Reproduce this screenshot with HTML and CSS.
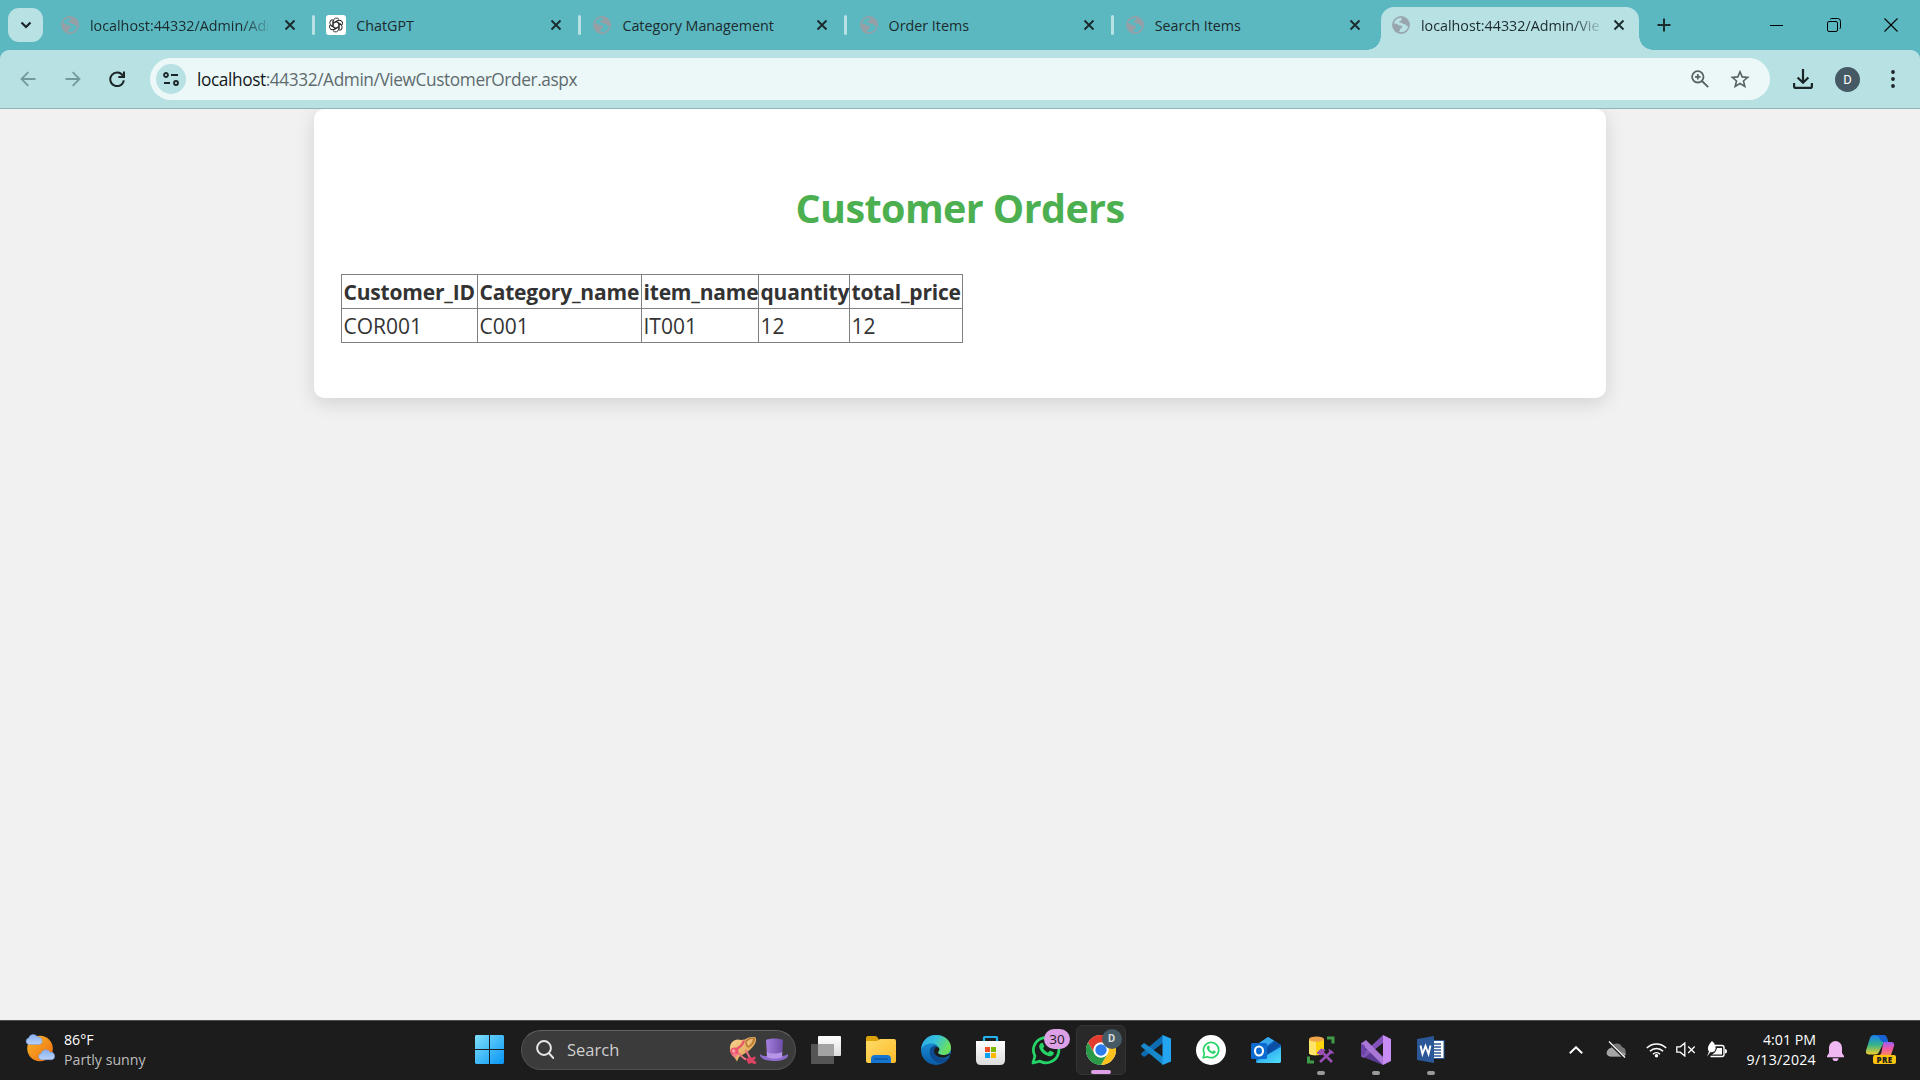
FILE: index.html
```html
<!DOCTYPE html>
<html lang="en">
<head>
<meta charset="utf-8">
<title>Customer Orders</title>
<link rel="stylesheet" href="styles.css">
</head>
<body>
<svg class="defs" width="0" height="0" aria-hidden="true">
  <defs>
    <symbol id="globe" viewBox="0 0 18 18">
      <circle cx="9" cy="9" r="8.100" fill="none" stroke="currentColor" stroke-width="1.600"/>
      <path d="M10 1.200c4 .3 7 3.600 7 7.600l-.6 1.400-2.200-.6-1-1.400-2.400-.2-.6-1.300H7.600L7.200 5.300l2.200-.8zM1.200 7.200l3.300.6 2.300 1.500 3 .5.500 1.900-2.100 1-.5 2.200-1.900 1.600C2.900 15.300 1.200 12.400 1.200 9z" fill="currentColor"/>
    </symbol>
    <symbol id="x" viewBox="0 0 12 12"><path d="M1.500 1.500l9 9M10.500 1.500l-9 9" stroke="#1b2b2d" stroke-width="1.900" fill="none"/></symbol>
    <symbol id="whatsapp" viewBox="0 0 30 30">
      <path d="M2 28l1.900-7A12.700 12.700 0 1 1 9 26.200z" fill="none" stroke="#25d366" stroke-width="2.800" stroke-linejoin="round"/>
      <path d="M9.500 8.500c1-1.200 2.200-1 2.700.2l.9 2.200c.3.800-.3 1.400-1.100 2.200 1.100 2.200 2.700 3.700 5 4.700l1.500-1.700c.5-.6 1-.4 1.500-.2l2.200 1.100c.9.500.7 1.400.3 2.300-.8 1.700-3.300 2.500-5.300 1.800-4.500-1.500-7.400-4.300-8.800-8.200-.5-1.700 0-3.300 1.100-4.400z" fill="#25d366"/>
    </symbol>
    <linearGradient id="gWin" x2="1" y2="1"><stop stop-color="#7fe0fb"/><stop offset="1" stop-color="#0795f5"/></linearGradient>
    <linearGradient id="gSun" x2="1" y2="1"><stop stop-color="#f7b92b"/><stop offset="1" stop-color="#f06a0d"/></linearGradient>
    <linearGradient id="gCloud" x2="0" y2="1"><stop stop-color="#8bb0ee"/><stop offset="1" stop-color="#b7d2fb"/></linearGradient>
    <linearGradient id="gFolder" x2="1" y2="1"><stop stop-color="#ffdc66"/><stop offset="1" stop-color="#fdbb2b"/></linearGradient>
    <linearGradient id="gEdge1" x2="1" y2=".4"><stop stop-color="#2aa5e8"/><stop offset=".5" stop-color="#35c1dc"/><stop offset="1" stop-color="#6ce05c"/></linearGradient>
    <linearGradient id="gEdge2" x2="0" y2="1"><stop stop-color="#1a9de4"/><stop offset="1" stop-color="#0c59a4"/></linearGradient>
    <linearGradient id="gBag" x2="0" y2="1"><stop stop-color="#fff"/><stop offset="1" stop-color="#dcdcdc"/></linearGradient>
    <linearGradient id="gCyan" x2="1" y2="1"><stop stop-color="#1b8fe8"/><stop offset="1" stop-color="#53e1fb"/></linearGradient>
    <linearGradient id="gCop1" x2="0" y2="1"><stop stop-color="#1a7ff0"/><stop offset=".5" stop-color="#34b38a"/><stop offset="1" stop-color="#f2cf2a"/></linearGradient>
    <linearGradient id="gCop2" x2="0" y2="1"><stop stop-color="#9a5cf5"/><stop offset=".5" stop-color="#f05aa8"/><stop offset="1" stop-color="#fb8a5c"/></linearGradient>
    <linearGradient id="gHat" x2="1"><stop stop-color="#a37fdb"/><stop offset="1" stop-color="#6e4fa9"/></linearGradient>
    <linearGradient id="gStraw" x2="1" y2="1"><stop stop-color="#fbd797"/><stop offset="1" stop-color="#d8943f"/></linearGradient>
  </defs>
</svg>

<div class="screen">
  <header class="tabstrip">
    <button class="tab-search" aria-label="Search tabs"><svg width="12" height="8" viewBox="0 0 12 8"><path d="M1.500 1.500 6 6l4.500-4.500" fill="none" stroke="#1b2527" stroke-width="2.200"/></svg></button>
    <div class="tabs">
      <div class="tab"><svg class="fav"><use href="#globe"/></svg><span class="tab-title fade">localhost:44332/Admin/AdminHome</span><svg class="tab-x"><use href="#x"/></svg></div>
      <div class="tab">
        <svg class="fav gpt" viewBox="0 0 20 20"><rect width="20" height="20" rx="3" fill="#fff"/><g fill="none" stroke="#222" stroke-width=".9"><path id="petal" d="M7.300 10.900V6.200a3.200 3.200 0 0 1 5.700-1.900M7.300 7.900l3.900-2.300a3.200 3.200 0 0 1 1.600-.4"/><use href="#petal" transform="rotate(60 10 10)"/><use href="#petal" transform="rotate(120 10 10)"/><use href="#petal" transform="rotate(180 10 10)"/><use href="#petal" transform="rotate(240 10 10)"/><use href="#petal" transform="rotate(300 10 10)"/></g></svg>
        <span class="tab-title">ChatGPT</span><svg class="tab-x"><use href="#x"/></svg></div>
      <div class="tab"><svg class="fav"><use href="#globe"/></svg><span class="tab-title">Category Management</span><svg class="tab-x"><use href="#x"/></svg></div>
      <div class="tab"><svg class="fav"><use href="#globe"/></svg><span class="tab-title">Order Items</span><svg class="tab-x"><use href="#x"/></svg></div>
      <div class="tab last"><svg class="fav"><use href="#globe"/></svg><span class="tab-title">Search Items</span><svg class="tab-x"><use href="#x"/></svg></div>
      <div class="tab active"><svg class="fav"><use href="#globe"/></svg><span class="tab-title fade">localhost:44332/Admin/ViewCustomer</span><svg class="tab-x"><use href="#x"/></svg></div>
    </div>
    <svg class="new-tab" width="14" height="14" viewBox="0 0 14 14"><path d="M7 .5v13M.5 7h13" stroke="#1b2b2d" stroke-width="2"/></svg>
    <div class="win-controls">
      <svg width="14" height="14" viewBox="0 0 14 14"><path d="M1 7.500h13" stroke="#000"/></svg>
      <svg width="14" height="14" viewBox="0 0 14 14" fill="none" stroke="#000"><rect x=".5" y="3.500" width="10" height="10" rx="1.500"/><path d="M3 1.400C3.500.8 4 .5 4.700.5h6a2.800 2.800 0 0 1 2.800 2.800v6c0 .8-.3 1.300-.9 1.700"/></svg>
      <svg width="14" height="14" viewBox="0 0 14 14"><path d="M.5.500l13 13M13.500.5l-13 13" stroke="#000" stroke-width="1.100"/></svg>
    </div>
  </header>

  <div class="toolbar-wrap">
  <nav class="toolbar">
    <div class="nav-buttons">
      <svg width="16" height="16" viewBox="0 0 16 16" fill="none" stroke="#73999d" stroke-width="1.800"><path d="M15.500 8H1.800M8.300 1.200 1.500 8l6.800 6.800"/></svg>
      <svg width="16" height="16" viewBox="0 0 16 16" fill="none" stroke="#73999d" stroke-width="1.800"><path d="M.5 8h13.700M7.700 1.200 14.500 8l-6.800 6.800"/></svg>
      <svg width="16" height="16" viewBox="0 0 16 16" fill="none" stroke="#1b2527" stroke-width="2"><path d="M13.800 4.600A6.800 6.800 0 1 0 14.800 9.300M15 .5v5.400H9.300"/></svg>
    </div>
    <div class="omnibox">
      <span class="site-info"><svg width="16" height="14" viewBox="0 0 16 14" fill="none" stroke="#1b2527" stroke-width="1.800"><circle cx="3" cy="3" r="2"/><path d="M8 3h7M1 11h6"/><circle cx="13" cy="11" r="2"/></svg></span>
      <span class="url"><b>localhost</b>:44332/Admin/ViewCustomerOrder.aspx</span>
      <svg class="zoom-ic" width="18" height="18" viewBox="0 0 18 18" fill="none" stroke="#566164" stroke-width="1.800"><circle cx="6.800" cy="6.800" r="5.700"/><path d="M11 11l6.200 6.200M6.800 4v5.600M4 6.800h5.600"/></svg>
      <svg class="star-ic" width="20" height="18" viewBox="0 0 20 18" fill="none" stroke="#566164" stroke-width="1.600"><path d="M10 1.800l2.200 5.100 5.500.5-4.200 3.600 1.300 5.400L10 13.500l-4.800 2.900L6.500 11 2.300 7.400l5.500-.5z"/></svg>
    </div>
    <svg class="download" width="20" height="20" viewBox="0 0 20 20" fill="none" stroke="#1b2527" stroke-width="2.200"><path d="M10 0v13.500M4.600 8.500 10 13.800l5.400-5.300M1.100 14v3.200c0 1 .6 1.700 1.700 1.700h14.400c1.100 0 1.700-.7 1.700-1.700V14"/></svg>
    <span class="avatar">D</span>
    <svg class="dots" width="4" height="18" viewBox="0 0 4 18" fill="#1b2527"><circle cx="2" cy="2" r="1.900"/><circle cx="2" cy="9" r="1.900"/><circle cx="2" cy="16" r="1.900"/></svg>
  </nav>
  </div>

  <main class="page">
    <section class="card">
      <h1>Customer Orders</h1>
      <table>
        <colgroup><col class="c1"><col class="c2"><col class="c3"><col class="c4"><col class="c5"></colgroup>
        <tr><th>Customer_ID</th><th>Category_name</th><th>item_name</th><th>quantity</th><th>total_price</th></tr>
        <tr><td>COR001</td><td>C001</td><td>IT001</td><td>12</td><td>12</td></tr>
      </table>
    </section>
  </main>

  <footer class="taskbar">
    <div class="weather">
      <svg width="30" height="30" viewBox="0 0 30 30"><circle cx="15" cy="15.500" r="12.800" fill="url(#gSun)"/><path id="cloud" d="M3.500 11.500a3.300 3.300 0 0 1 .2-6.400A4.800 4.800 0 0 1 12.600 4a3.900 3.900 0 0 1 2 7.500z" fill="url(#gCloud)" stroke="#7799e0" stroke-width=".5"/><use href="#cloud" x="12.500" y="15.200"/></svg>
      <div class="weather-text"><span>86°F</span><span class="dim">Partly sunny</span></div>
    </div>

    <div class="apps">
      <svg class="start" width="29" height="29" viewBox="0 0 29 29"><path d="M1 0h13v14H0V1zM15 0h13l1 1v13H15zM0 15h14v14H1l-1-1zM15 15h14v13l-1 1H15z" fill="url(#gWin)"/></svg>
      <div class="search">
        <svg width="18" height="19" viewBox="0 0 18 19" fill="none" stroke="#e6e6e6" stroke-width="2"><circle cx="8" cy="8" r="6.900"/><path d="M12.800 13l4.600 5" stroke-linecap="round"/></svg>
        <span class="search-label">Search</span>
        <svg class="hats" width="58" height="28" viewBox="0 0 58 28">
          <path d="M0 11C0 5 5 1 11 3l4-.5C19 0 23-.5 25.500.5c2 4-2 10-7.500 14-3 2-7 4-9 5.500l-2 4.500-2.500-4C1 18 0 15 0 11z" fill="url(#gStraw)"/>
          <path d="M15.500 3.500C19 .5 23 0 25 1.200c.5 3.500-3 8-7 9.500-2-1-3.200-3-2.500-7.200z" fill="#b97a33"/>
          <path d="M16.500 5c2-2.500 4.500-3.500 6.500-3-.5 3-2.500 6-5 7z" fill="#edbd76"/>
          <path d="M14 3.500c-1 4-4 7-8.500 9" fill="none" stroke="#e4566c" stroke-width="2.400"/>
          <path d="M8 16c3 2 4.500 5 8 6.500M15.500 13c2 3 3.500 6 5.500 10" fill="none" stroke="#ef7186" stroke-width="2"/>
          <circle cx="4.500" cy="14.500" r="4" fill="#ec536e"/><circle cx="3.700" cy="14" r="1.700" fill="#ffa3a9"/><circle cx="5" cy="18" r="2.200" fill="#f4798b"/>
          <path d="M16 22l4-2.200 2 1 3-1.500.8 2.500-2.300 1.200 3 2-1 2.200-4-1.200-3 1z" fill="#dc4262"/>
          <path d="M30 17c-1 4 5 7 14 7s15-3 14-7c-3 2-6 2-8 2H37c-3 0-5 0-7-2z" fill="#8d6ccb"/>
          <path d="M36 3c4-2 13-2 17 0l-1 16c-4 2-11 2-15 0z" fill="url(#gHat)"/><path d="M36.700 15c4 2 11 2 15.600 0l-.3 5c-4 2-11 2-15 0z" fill="#b796e8"/>
        </svg>
      </div>
      <div class="app"><svg width="30" height="28" viewBox="0 0 30 28"><rect x="7" width="23" height="20" rx="1" fill="url(#gBag)"/><rect y="8" width="23" height="20" rx="1" fill="#5c5c5c" opacity=".9"/><path d="M7 8h16v12H7z" fill="#a3a3a3"/></svg></div>
      <div class="app"><svg width="30" height="27" viewBox="0 0 30 27"><path d="M0 2q0-2 2-2h7q2 0 3 2l1 2v5H0z" fill="#dca10b"/><path d="M0 5h11l3-2h14q2 0 2 2v20q0 2-2 2H2q-2 0-2-2z" fill="url(#gFolder)"/><path d="M5 27v-4q0-4 4-4h12q4 0 4 4v4z" fill="#1476d1"/><path d="M8 23h14" stroke="#0b519a" stroke-width="1.300"/></svg></div>
      <div class="app"><svg width="30" height="30" viewBox="0 0 30 30"><circle cx="15" cy="15" r="15" fill="url(#gEdge2)"/><path d="M1 10C3 4 8 0 15 0c9 0 15 6 15 12.500 0 5-3.500 7.500-8 7.500-3 0-5-1-5-2.500 0-1 1-1.500 1-3.500 0-3-3-5.500-7-5.500C6 8.500 2 10 0 15z" fill="url(#gEdge1)"/><path d="M15 10.500c-5 0-7 4-6 8.500 1 5 6 9 12 9.500 4-1.500 6.500-4 7.500-6.500-5 3-15 1.500-14.500-5 0-3 2-4 2-5z" fill="#0d4a8e"/><path d="M18.500 14c-1-2-3-2.500-4-1.500-3 3-1 8 3 9.500s9 .5 12-2.500l-1 3q2-2 .5-4c-2 1-4 1.500-7 1.500-3 0-5-1-5-2.500 0-1 1.500-1.500 1.500-3.500z" fill="#1c1c1c"/></svg></div>
      <div class="app"><svg width="29" height="30" viewBox="0 0 29 30"><path d="M8 8V2.500Q8 2 8.500 2h12q.5 0 .5.500V8" fill="none" stroke="#23b1ee" stroke-width="2.200"/><path d="M0 6h29v19q0 5-5 5H5q-5 0-5-5z" fill="url(#gBag)"/><path d="M9 12h5v5H9z" fill="#f04f23"/><path d="M15 12h5v5h-5z" fill="#7eb900"/><path d="M9 18h5v5H9z" fill="#09a3ed"/><path d="M15 18h5v5h-5z" fill="#fdb800"/></svg></div>
      <div class="app"><svg width="30" height="30"><use href="#whatsapp"/></svg><span class="badge">30</span></div>
      <div class="app current"><svg width="30" height="30" viewBox="0 0 30 30"><circle cx="15" cy="15" r="15" fill="#fff"/><path d="M2 7.500A15 15 0 0 1 28 7.500H15a7.500 7.500 0 0 0-6.500 11.200z" fill="#e33b2e"/><path d="M28 7.500A15 15 0 0 1 15 30l6.500-11.200A7.500 7.500 0 0 0 15 7.500z" fill="#fcc31e"/><path d="M15 30A15 15 0 0 1 2 7.500l6.500 11.300A7.500 7.500 0 0 0 21.500 18.700z" fill="#2a9a49"/><circle cx="15" cy="15" r="7.500" fill="#fff"/><circle cx="15" cy="15" r="5.700" fill="#2d7cee"/></svg><span class="profile-badge">D</span></div>
      <div class="app"><svg width="30" height="30" viewBox="0 0 30 30"><path d="M22 8L4 21.500q-1 .5-1.500 0L.6 20q-1-1 0-2L22 0z" fill="#0e6cb0"/><path d="M22 22L4 8.500q-1-.5-1.500 0L.6 10q-1 1 0 2L22 30z" fill="#1788ca"/><path d="M21.500 0L30 3.500v23L21.500 30z" fill="#23a5f0"/></svg></div>
      <div class="app"><svg width="30" height="30" viewBox="0 0 30 30"><circle cx="15" cy="15" r="15" fill="#fff"/><use href="#whatsapp" x="6" y="6" width="18" height="18"/></svg></div>
      <div class="app"><svg width="30" height="26" viewBox="0 0 30 26"><path d="M5 9L17 0l13 8v16q0 2-2 2H7q-2 0-2-2z" fill="#0f6cc4"/><path d="M5 8L17 0l6 3.500L10 13z" fill="#38a9ec"/><path d="M12 14L24 4l6 4-14 10z" fill="#0b4fa5"/><path d="M5 24l25-14v14q0 2-2 2H7q-2 0-2-2z" fill="url(#gCyan)"/><rect y="6" width="16" height="16" rx="1.500" fill="#0c6bd0"/><ellipse cx="8" cy="14" rx="4" ry="4.500" fill="none" stroke="#fff" stroke-width="2.100"/></svg></div>
      <div class="app running"><svg width="28" height="28" viewBox="0 0 28 28"><path d="M2 3v14c0 3 15 3 15 0V3z" fill="#fcd40e"/><path d="M2 3v14c0 1.500 3 2.300 7 2.300V3z" fill="#ffe46a"/><ellipse cx="9.500" cy="3.200" rx="7.500" ry="2.700" fill="#efa54b"/><path d="M20 2h6v5.500M1.500 20.500V26H7" fill="none" stroke="#3f9b48" stroke-width="3"/><path d="M13 26l12-11M15 16l10 10" stroke="#9a4fb5" stroke-width="2.600"/><path d="M10 17l4-4 4 1-4 5zM22 13l1 4 4 0" fill="#9a4fb5" stroke="#9a4fb5"/></svg></div>
      <div class="app running"><svg width="30" height="30" viewBox="0 0 30 30"><path d="M0 8.500L4 7l18 15v8L2 22 0 21z" fill="#5b3a93"/><path d="M0 21.500L3 23 22 8V0L8 13 0 20z" fill="#8153b8"/><path d="M0 8.500L5 5l17 17v8z" fill="#a877d8"/><path d="M4 11v8L0 21V8.500z" fill="#6d44a5"/><path d="M22 0l8 4v22l-8 4z" fill="#c98cf4"/></svg></div>
      <div class="app running"><svg width="28" height="27" viewBox="0 0 28 27"><rect x="12" y="4.500" width="15" height="18" fill="#fff" stroke="#2b5797"/><path d="M17 8h7M17 11h7M17 14h7M17 17h7M17 20h7" stroke="#2b5797" stroke-width="1.300"/><path d="M0 3l17-3v27L0 24z" fill="#2b5797"/><path d="M3.500 9.500l2 8.500 3-8 3 8 2-8.500" fill="none" stroke="#fff" stroke-width="1.900"/></svg></div>
    </div>

    <div class="tray">
      <svg class="chev" width="14" height="8" viewBox="0 0 14 8"><path d="M.8 7.200L7 1.200l6.200 6" fill="none" stroke="#fff" stroke-width="1.900"/></svg>
      <svg class="onedrive" width="21" height="18" viewBox="0 0 21 18"><path d="M4.500 15.500a4.400 4.400 0 0 1 .3-8.500A6 6 0 0 1 16 6a5 5 0 0 1 .5 9.500z" fill="#777"/><path d="M6 7c4-1 6 1 8 3l6 3c-1 2-2 2.500-3.500 2.500h-12A4.400 4.400 0 0 1 .5 12C1 9 3 7 6 7z" fill="#a5a5a5"/><path d="M2.500.800l16 16" stroke="#1c1c1c" stroke-width="3"/><path d="M3 .500l16 16" stroke="#fff" stroke-width="1.300"/></svg>
      <svg width="21" height="16" viewBox="0 0 21 16" fill="none" stroke="#fff" stroke-width="1.500"><path d="M.8 6a13.700 13.700 0 0 1 19.400 0M3.900 9.200a9.300 9.300 0 0 1 13.200 0M7 12.200a5 5 0 0 1 7 0"/><circle cx="10.500" cy="13.800" r="1.700" fill="#fff" stroke="none"/></svg>
      <svg class="mute" width="20" height="15" viewBox="0 0 20 15" fill="none" stroke="#fff" stroke-width="1.300"><path d="M.8 4.800h3.400L8.800 1v13l-4.600-3.800H.8zM12.200 4.500l6.500 6.500M18.700 4.500L12.200 11"/></svg>
      <svg width="21" height="18" viewBox="0 0 21 18"><path d="M9 4.500h7q2 0 2 2v7q0 2-2 2H4.500" fill="none" stroke="#fff" stroke-width="1.400"/><path d="M6 0c3.500 3 4.500 6.500 3 9.500-1 1.500-3 2-4.500 1.500L1 15.500 3 10.500C.5 7 3 3 6 0zM11 7h5v6.500H6q4-2 5-6.500zM19 8q2 0 2 2.300T19 12.500z" fill="#fff"/></svg>
      <div class="clock"><span>4:01 PM</span><span class="date">9/13/2024</span></div>
      <svg class="bell" width="17" height="20" viewBox="0 0 17 20" fill="#efb8f2"><path d="M8.500 0A6.500 6.500 0 0 1 15 6.500V12l2 3v1.200H0V15l2-3V6.500A6.500 6.500 0 0 1 8.500 0zM5.500 17.200h6a3 3 0 0 1-6 0z"/></svg>
      <span class="copilot"><svg width="29" height="22" viewBox="0 0 29 22"><path d="M8 0h9q3 0 4 3l1 4h-4l-5 10q-1 2.500-4 2.500H3q-4 0-3-4L4 3q1-3 4-3z" fill="url(#gCop1)"/><path d="M9 0h8q3 0 4 3l1 4h-5q-2 0-3-3t-5-4z" fill="#1762d4"/><path d="M18 7h7q4 0 3 4l-3 9H13q2 0 2.500-3L17 9z" fill="url(#gCop2)"/></svg><b>PRE</b></span>
    </div>
  </footer>
</div>
</body>
</html>
```
FILE: styles.css
```css
* { box-sizing: border-box; }
body { margin: 0; font-family: "Open Sans", "Noto Sans", sans-serif; overflow: hidden; }
svg { flex: none; display: block; }
.defs { position: absolute; }
.screen { width: 1920px; height: 1080px; display: flex; flex-direction: column; background: #f1f1f1; }

/* Tab strip */
.tabstrip { height: 50px; flex: none; background: #5bb8c1; display: flex; align-items: center; padding-left: 8px; }
.tab-search { width: 35px; height: 34px; border: 0; border-radius: 11px; background: #b8e1e4; padding: 0; display: flex; align-items: center; justify-content: center; }
.tabs { display: flex; height: 50px; margin-left: 3px; }
.tab { width: 266.200px; height: 50px; display: flex; align-items: center; padding-left: 15px; color: #1b2b2d; position: relative; }
.tab:not(.last):not(.active)::after { content: ""; flex: none; width: 3px; height: 20px; border-radius: 2px; background: #b8e1e4; margin-left: 16px; }
.fav { width: 18px; height: 18px; color: #979fa6; }
.gpt { width: 20px; height: 20px; margin-left: -1px; margin-right: -1px; }
.tab-title { width: 178px; flex: none; margin-left: 11px; font-size: 14.300px; white-space: nowrap; overflow: hidden; }
.fade { -webkit-mask-image: linear-gradient(90deg, #000 85%, transparent 103%); mask-image: linear-gradient(90deg, #000 85%, transparent 103%); }
.tab-x { width: 12px; height: 12px; margin-left: 16px; }
.tab.active { width: 258px; height: 43px; margin-top: 7px; margin-left: 4px; padding: 0 0 7px 11px; background: #b8e1e4; border-radius: 13px 13px 0 0; }
.tab.active::before, .tab.active::after { content: ""; position: absolute; bottom: 0; width: 14px; height: 14px; }
.tab.active::before { left: -14px; background: radial-gradient(circle at 0 0, transparent 13.500px, #b8e1e4 14px); }
.tab.active::after { right: -14px; background: radial-gradient(circle at 100% 0, transparent 13.500px, #b8e1e4 14px); }
.tab.active .fav { color: #98a5ad; }
.tab.active .tab-x { margin-left: 14px; }
.new-tab { margin-left: 18px; }
.win-controls { display: flex; gap: 43.500px; margin-left: auto; padding-right: 22px; }

/* Toolbar */
.toolbar-wrap { background: #5bb8c1; flex: none; }
.toolbar { height: 59px; background: #b8e1e4; border-bottom: 1px solid #8fb5b9; border-radius: 9px 9px 0 0; display: flex; align-items: center; padding-left: 20px; }
.nav-buttons { display: flex; gap: 28.500px; }
.omnibox { width: 1620px; height: 42px; border-radius: 21px; background: #ecf8f8; margin-left: 25px; padding-left: 6px; display: flex; align-items: center; }
.site-info { width: 30px; height: 30px; border-radius: 50%; background: #b8e1e4; display: flex; align-items: center; justify-content: center; }
.url { margin: 1px 0 0 11px; font-size: 17.300px; letter-spacing: -.41px; color: #5f6b6e; white-space: nowrap; }
.url b { font-weight: 400; color: #15191a; }
.zoom-ic { margin-left: auto; }
.star-ic { margin: 0 20px 0 21px; }
.download { margin-left: 22.500px; }
.avatar { width: 25px; height: 25px; border-radius: 50%; background: #455a64; color: #fff; font: 400 13px/25px Roboto, sans-serif; text-align: center; margin-left: 22.500px; }
.dots { margin-left: 30.500px; }

/* Page */
.page { height: 911px; flex: none; overflow: hidden; }
.card { width: 1292px; height: 289px; margin: 0 auto; border-radius: 10px; background: #fff; box-shadow: 0 5px 19px rgba(0,0,0,.13); padding: 70px 27px 0; color: #333; }
h1 { margin: 0; height: 95px; line-height: 58px; text-align: center; font-size: 39.500px; letter-spacing: -.6px; font-weight: 700; color: #4caf50; }
table { border-collapse: collapse; table-layout: fixed; width: 621.500px; font-size: 21px; }
.c1 { width: 136px; } .c2 { width: 164px; } .c3 { width: 117px; } .c4 { width: 91px; } .c5 { width: 113px; }
th, td { height: 34px; border: 1px solid #808080; padding: 2px 0 0 1.500px; text-align: left; line-height: 31px; white-space: nowrap; }
th { font-weight: 700; letter-spacing: -.19px; }

/* Taskbar */
.taskbar { height: 60px; flex: none; background: #1c1c1c; border-top: 1px solid #484c4c; display: flex; align-items: center; color: #fff; font-size: 14.200px; line-height: 20px; padding-bottom: 2px; }
.weather { width: 450px; display: flex; padding-left: 25px; align-items: center; }
.weather svg { margin-top: -3px; }
.weather-text { margin-left: 9px; display: flex; flex-direction: column; }
.dim { color: #bdbdbd; }
.apps { display: flex; align-items: center; padding-left: 25px; }
.search { width: 275px; height: 40px; margin: 0 2px 0 17px; border-radius: 20px; background: #3b3b3b; border: 1px solid #505050; border-top-color: #646464; display: flex; align-items: center; padding-left: 14px; }
.search-label { margin: 1px 0 0 13px; font-size: 16.500px; color: #cfcfcf; }
.hats { margin: 2px 7px 0 auto; }
.app { width: 55px; height: 50px; position: relative; display: flex; align-items: center; justify-content: center; }
.badge { position: absolute; left: 26px; top: 4px; width: 26px; height: 20px; border-radius: 10px; background: #dda0e6; color: #1c1c1c; text-align: center; font-size: 13.500px; line-height: 20px; }
.current { width: 50px; margin: 0 2.500px; background: #292929; border: 1px solid #343434; border-radius: 6px; }
.current::after, .running::after { content: ""; position: absolute; bottom: 0; height: 4px; border-radius: 2px; }
.current::after { width: 20px; background: #dda0e6; }
.running::after { width: 8px; background: #9a9a9a; }
.profile-badge { position: absolute; left: 25px; top: 3px; width: 20px; height: 20px; border-radius: 50%; background: #455a64; color: #d5d9db; font: 700 11px/20px Roboto, sans-serif; text-align: center; }
.tray { margin-left: auto; display: flex; align-items: center; padding-right: 24px; }
.chev { margin-left: 1px; }
.onedrive { margin: 0 19px 0 23px; }
.mute { margin: 0 10px 0 9px; }
.clock { width: 79px; margin-left: 10px; display: flex; flex-direction: column; align-items: flex-end; white-space: nowrap; }
.date { letter-spacing: .25px; }
.bell { margin: 2px 22px 0 11px; }
.copilot { width: 30px; height: 30px; position: relative; }
.copilot b { position: absolute; left: 7px; bottom: 1px; width: 23px; height: 9px; border-radius: 2px; background: #fcc40f; color: #1c1c1c; font: 800 8px/9px "Open Sans", sans-serif; letter-spacing: .3px; text-align: center; }
```
